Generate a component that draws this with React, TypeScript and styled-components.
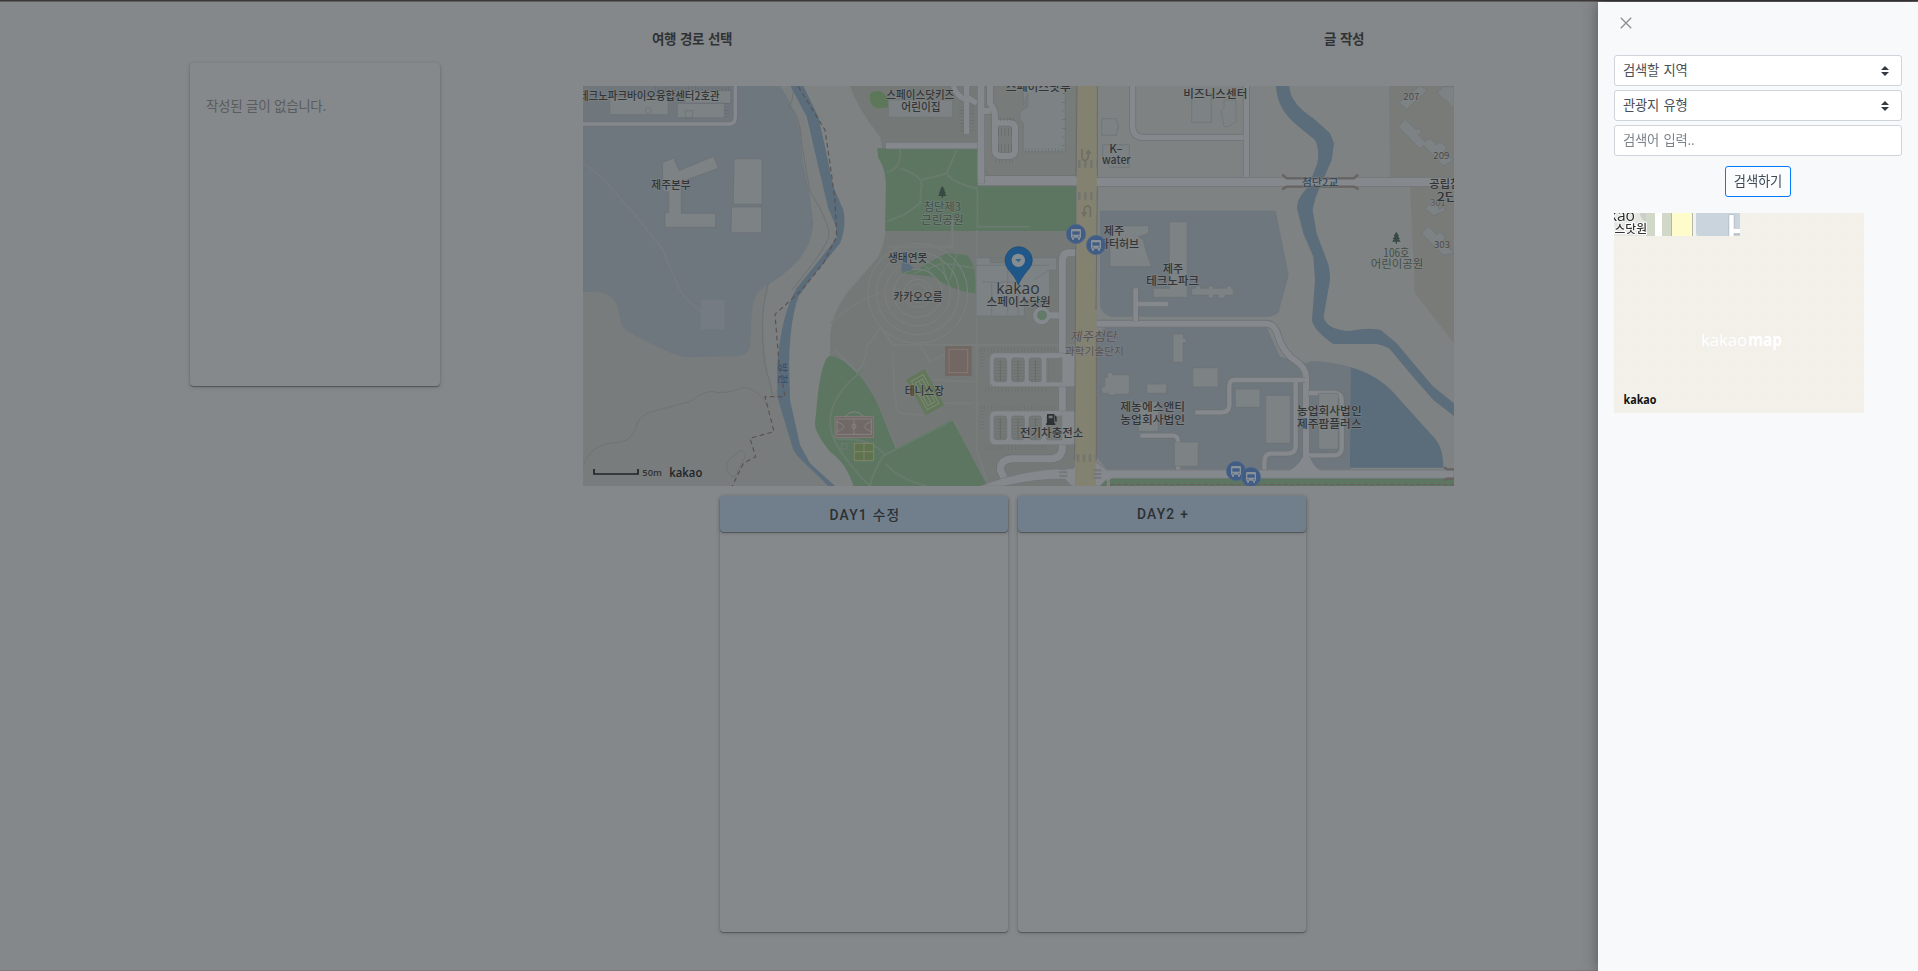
import React from "react";
import styled, { createGlobalStyle } from "styled-components";

const Global = createGlobalStyle`
  * { box-sizing: border-box; }
  html, body { margin: 0; height: 100%; overflow: hidden; }
  body { background: #84888a; font-family: "Noto Sans CJK KR", sans-serif; font-size: 14px; color: #2f3235; }
`;

const Page = styled.div`
  width: 100%;
  height: 971px;
  display: flex;
  flex-direction: column;
  border-top: 1px solid #3a3839;
  border-bottom: 1px solid #7c7a7e;
  box-shadow: inset 0 1px 0 #625d5e;
`;

const Columns = styled.main`
  display: flex;
  align-items: flex-start;
  padding-left: 190px;
`;

const PostCard = styled.aside`
  width: 250px;
  height: 323px;
  margin-top: 62px;
  padding: 30px 16px;
  border-radius: 4px;
  background: #85898b;
  box-shadow: 0 1px 1px rgba(0, 0, 0, 0.3), 0 1px 4px rgba(0, 0, 0, 0.18);
`;

const EmptyText = styled.p`
  margin: 0;
  font-size: 13.5px;
  line-height: 25px;
  letter-spacing: -0.35px;
  word-spacing: 1.2px;
  color: #5a5d5f;
  white-space: nowrap;
`;

const Planner = styled.section`
  width: 871px;
  margin-left: 143px;
`;

const Headings = styled.header`
  height: 85px;
  padding: 27px 90px 0 69px;
  display: flex;
  justify-content: space-between;
`;

const Heading = styled.h2`
  margin: 0;
  font-size: 13.5px;
  line-height: 21px;
  font-weight: 700;
  letter-spacing: -0.4px;
  word-spacing: 1.3px;
  color: #303335;
  white-space: nowrap;
`;

const MapCanvas = styled.svg`
  display: block;
  width: 871px;
  height: 400px;
  font-family: "Noto Sans CJK KR", sans-serif;
`;

const Days = styled.div`
  display: flex;
  gap: 10px;
  padding: 10px 0 0 137px;
`;

const DayPanel = styled.div`
  width: 288px;
  height: 436px;
  border-radius: 4px;
  background: #85898b;
  box-shadow: 0 1px 1px rgba(0, 0, 0, 0.3), 0 1px 4px rgba(0, 0, 0, 0.18);
`;

const DayButton = styled.button`
  display: block;
  width: 100%;
  height: 36px;
  padding: 0 0 0 2px;
  border: 0;
  border-radius: 4px;
  background: #717f8c;
  color: #2c3033;
  font-family: Roboto, "Noto Sans CJK KR", sans-serif;
  font-size: 13.8px;
  font-weight: 500;
  letter-spacing: 1.25px;
  box-shadow: 0 1px 1px rgba(0, 0, 0, 0.35), 0 1px 4px rgba(0, 0, 0, 0.14);
`;

const Drawer = styled.aside`
  position: fixed;
  top: 2px;
  right: 0;
  bottom: 0;
  width: 320px;
  padding: 15px 16px;
  background: #f8f9fb;
  box-shadow: 0 0 14px rgba(0, 0, 0, 0.36);
`;

const CloseButton = styled.button`
  display: block;
  width: 12px;
  height: 12px;
  margin: 0 0 26px 6px;
  padding: 0;
  border: 0;
  background: none;
  svg { display: block; }
`;

const Form = styled.form`
  display: flex;
  flex-direction: column;
  gap: 4px;
`;

const Field = styled.div<{ $muted?: boolean }>`
  height: 31px;
  padding: 0 12px 2px 8px;
  display: flex;
  align-items: center;
  justify-content: space-between;
  border: 1px solid #ced4da;
  border-radius: 3px;
  background: #fff;
  color: ${(p) => (p.$muted ? "#7b838a" : "#495057")};
  font-size: 13.3px;
  line-height: 20px;
  letter-spacing: -0.2px;
  word-spacing: 1.6px;
  svg { margin-top: 2px; }
`;

const SearchButton = styled.button`
  align-self: center;
  width: 66px;
  height: 31px;
  margin-top: 6px;
  padding: 0 0 3px;
  border: 1px solid #007bff;
  border-radius: 3px;
  background: #fbfcfd;
  color: #3d4a57;
  font: 13.3px "Noto Sans CJK KR", sans-serif;
  letter-spacing: -0.15px;
`;

const MiniMap = styled.svg`
  display: block;
  width: 250px;
  height: 200px;
  margin-top: 16px;
  font-family: "Noto Sans CJK KR", sans-serif;
`;

const Caret = () => (
  <svg width="8" height="10" viewBox="0 0 8 10">
    <path d="M0 4 4 0l4 4zM0 6l4 4 4-4z" fill="#343a40" />
  </svg>
);

type LabelProps = { x: number; y: number; w: number; size?: number; color?: string; weight?: number; children: string };

/* x is the centre of the label, w its drawn width */
const Label = ({ x, y, w, size = 34, color = "#323538", weight = 500, children }: LabelProps) => (
  <text
    x={x - w / 2}
    y={y + size * 0.36}
    fontSize={size}
    fontWeight={weight}
    fill={color}
    stroke="#858989"
    strokeOpacity="0.55"
    strokeWidth="4"
    paintOrder="stroke"
    textLength={w}
    lengthAdjust="spacingAndGlyphs"
  >
    {children}
  </text>
);

const BusStop = ({ x, y }: { x: number; y: number }) => (
  <g transform={`translate(${x} ${y})`}>
    <circle r="29" fill="#415c85" stroke="#52698d" strokeWidth="2" />
    <path d="M-11-15H11Q15-15 15-11V11H-15V-11Q-15-15-11-15Z" fill="#8a9299" />
    <path d="M-11-8H11V2H-11Z" fill="#415c85" />
    <path d="M-12 11h6v6h-6zM6 11h6v6H6z" fill="#8a9299" />
    <circle cx="-9" cy="7" r="2" fill="#415c85" />
    <circle cx="9" cy="7" r="2" fill="#415c85" />
  </g>
);

const Tree = ({ x, y }: { x: number; y: number }) => (
  <path
    transform={`translate(${x} ${y})`}
    d="M0-18 8-5H5L11 4H7L13 12H2V18H-2V12H-13L-7 4H-11L-5-5H-8Z"
    fill="#394a43"
  />
);

const C = {
  land: "#787c7c",
  pale: "#7e8282",
  park: "#747978",
  zone: "#6e767e",
  river: "#5b6c7a",
  green: "#5c7662",
  road: "#85898d",
  edge: "#6f7375",
  house: "#7d8285",
  yellow: "#838270",
};

const ParkingLot = ({ y }: { y: number }) => (
  <g>
    <path d={`M1203 ${y - 10}H1430M1215 ${y + 110}H1400`} stroke="#6c7170" strokeWidth="14" strokeDasharray="2 8" />
    <path d={`M1206 ${y - 10}V${y + 60}M1409 ${y + 15}V${y + 90}`} stroke="#6c7170" strokeWidth="14" strokeDasharray="2 8" />
    <rect x="1229" y={y} width="269" height="101" rx="16" fill={C.road} stroke="#747879" strokeWidth="2" />
    {[1242, 1295, 1347].map((x) => (
      <g key={x}>
        <rect x={x} y={y + 15} width="38" height="71" rx="8" fill="#747978" stroke="#6b706f" strokeWidth="2" />
        <path d={`M${x + 10} ${y + 24}V${y + 82}M${x + 28} ${y + 24}V${y + 82}`} stroke="#6c7170" strokeWidth="15" strokeDasharray="2 7" />
        <path d={`M${x + 19} ${y + 22}V${y + 84}`} stroke="#656a69" strokeWidth="3" />
      </g>
    ))}
    <rect x="1399" y={y + 13} width="48" height="75" fill="#747978" />
    <path d={`M1405 ${y + 15}V${y + 86}`} stroke="#6c7170" strokeWidth="1" />
    <path d={`M1385 ${y + 3}H1398V${y + 98}H1385Z`} fill={C.road} />
  </g>
);

const Road = ({ d, w }: { d: string; w: number }) => (
  <g fill="none" strokeLinejoin="round">
    <path d={d} stroke={C.edge} strokeWidth={w + 5} />
    <path d={d} stroke={C.road} strokeWidth={w} />
  </g>
);

const TravelMap = () => (
  <MapCanvas viewBox="9 18 2613 1200" preserveAspectRatio="none">
    <rect x="9" y="18" width="2613" height="1200" fill={C.land} />
    <path d="M640 18H2622V1218H745L640 1110 592 930 605 750 650 620 772 475Z" fill={C.pale} />
    <path d="M590 18H650L745 385 772 475 650 625 592 850V930L578 940Q550 830 548 700L565 600 668 500Z" fill="#7b7f7f" />
    <path d="M9 18H600Q650 90 660 160L668 240 690 350 700 430Q695 500 650 545 615 585 540 629 517 655 515 700L510 800Q500 830 460 829L320 832Q270 825 140 752 120 735 115 690 105 640 50 636H9Z" fill={C.zone} />
    <path d="M9 250Q40 265 90 320L170 410 245 505Q275 570 300 630 320 665 365 695" fill="none" stroke="#747a80" strokeWidth="6" />
    <rect x="362" y="660" width="72" height="87" fill="#747b82" />
    <path d="M640 18Q640 70 625 78 660 95 665 190L690 335Q750 430 747 470 735 510 635 630M565 610Q548 680 548 720 545 850 568 900L578 945" fill="none" stroke="#6d7171" strokeWidth="3" />
    <path d="M9 1155Q35 1095 90 1090 150 1090 165 1050 175 1005 215 995L330 965Q375 930 400 935 430 945 490 922 535 925 565 980M440 1160Q435 1145 480 1112 505 1115 490 1140L465 1190Q445 1190 440 1160" fill="none" stroke="#6f7373" strokeWidth="3" />

    {/* western stream */}
    <path d="M632 18 680 110 710 240 745 385 768 440 770 475 650 625Q605 700 592 850V950L640 1110 655 1130 745 1218H765L690 1150 660 1095 630 960 627 850Q630 720 655 650L690 600 780 490Q800 440 790 390L760 320 735 200 715 110 670 18Z" fill={C.river} />
    <path d="M655 20 735 150 750 250 765 360 770 470 730 550 665 630 585 703 597 850 615 950H555L582 1055 510 1075 527 1130 490 1150 457 1218" fill="none" stroke="#5c5252" strokeWidth="3.5" strokeDasharray="14 10" />

    {/* park */}
    <path d="M810 18Q835 90 900 170L917 260 918 450Q910 500 895 530L800 640Q750 710 750 780V828L900 990 950 1107 1120 1020 1220 1218H1485V18Z" fill={C.park} />
    <path d="M892 205H1192V318H1488V453H915L918 310Q915 260 895 235ZM1100 520 1160 525Q1190 550 1187 640 1120 635 1060 590L965 580Q970 560 1010 570L1060 540Z" fill={C.green} />
    <path d="M870 40Q900 22 920 50L940 80 900 85Q865 85 870 40Z" fill="#5d7858" />
    <path d="M750 828Q790 830 850 900 890 960 900 990L948 1107 1118 1020 1222 1218H820Q800 1150 750 1115 705 1060 705 1030L715 930Q730 830 750 828Z" fill={C.green} />
    <g fill="none" stroke="#687b6c" strokeWidth="6">
      <path d="M960 205Q965 270 920 275M960 265Q1020 285 1025 310L1020 370 970 405 920 425M1025 300 1100 280 1130 210M1100 280Q1120 310 1190 325M1192 320V445M1190 440H1350" />
      <path d="M850 870Q730 960 755 1060 780 1130 870 1218M770 1078Q870 1070 915 1125L1118 1020M915 1120Q880 1170 870 1218M915 1150Q960 1200 1040 1218" />
      <path d="M1010 520 1060 590M1080 525 1100 600M1130 525 1110 600M1000 580 1090 550 1187 565" />
    </g>
    <g fill="none" stroke="#7c8180" strokeWidth="3">
      {[28, 42, 72, 98, 124, 150].map((r) => (
        <circle key={r} cx="1013" cy="640" r={r} />
      ))}
      <path d="M900 740 940 795H1485M1190 450V1110L1220 1200M940 820Q940 990 960 1000L1030 1005M1060 900 1190 905M1080 970H1180M1020 795 1050 845 1140 800M1117 420V500L920 500M750 730Q830 660 900 640M765 810 830 875Q860 850 860 800 900 750 900 740" strokeWidth="6" stroke="#787d7c" />
    </g>
    <path d="M965 550h20l15 12-8 10-28 2z" fill={C.river} />

    {/* courts */}
    <rect x="765" y="1010" width="115" height="62" fill="#706968" stroke="#857b7a" strokeWidth="3" />
    <g fill="none" stroke="#8b8582" strokeWidth="2.5">
      <rect x="771" y="1017" width="103" height="46" />
      <path d="M822 1017v46M771 1025q42 15 0 30M874 1025q-42 15 0 30M795 1010Q822 980 852 1010" />
      <circle cx="822" cy="1039" r="6" />
      <rect x="785" y="1091" width="16" height="16" stroke="#727b70" />
    </g>
    <path d="M823 1090h58v52h-58z M852 1090v52M823 1115h58" fill="#5f734e" stroke="#7f856c" strokeWidth="3" />
    <rect x="1095" y="798" width="80" height="90" fill="#736763" />
    <rect x="1107" y="808" width="56" height="70" fill="none" stroke="#837975" strokeWidth="3" />
    <g transform="translate(1035 936) rotate(-29)">
      <rect x="-32" y="-60" width="64" height="122" fill="#63775a" />
      <path d="M-20-48H20V50H-20ZM-12-38H12V40H-12ZM-20 0H20M0-38V40" fill="none" stroke="#7c8974" strokeWidth="3" />
    </g>

    {/* buildings of the north-west block */}
    <path d="M9 18H455V108Q455 124 440 124H9Z" fill="#70777c" />
    <g fill={C.house} stroke="#6a6f74" strokeWidth="2">
      <path d="M89 50H265V104H89ZM292 70H433V113H292ZM315 32H452V70H315ZM316 92H338V113H316Z" />
      <circle cx="205" cy="92" r="9" />
      <path d="M247 248 281 234 297 272 401 229 415 265 304 305V400H407V442H255V398H266V335H249Z" />
      <path d="M462 236H546V373H460ZM455 381H545V458H453Z" />
    </g>
    <path d="M225 26H452" stroke="#656a70" strokeWidth="14" strokeDasharray="2 8" />
    <path d="M441 70V118" stroke="#656a70" strokeWidth="14" strokeDasharray="2 8" />
    <Road d="M0 132H448Q466 132 466 112V10" w={10} />

    {/* research blocks east of the avenue */}
    <path d="M1560 392H2087L2126 585 2095 700 2070 710H1592Q1560 700 1560 670Z" fill={C.zone} />
    <path d="M1550 760 1580 742H2060L2100 830 2180 850Q2190 843 2200 843 2260 845 2312 862V1168H1580L1550 1130Z" fill={C.zone} />
    <path d="M2312 862Q2400 885 2460 960L2560 1070Q2590 1100 2590 1163H2310Z" fill={C.river} />
    <path d="M2427 18H2622V790L2505 640 2490 320 2430 292Z" fill="#797b79" />

    {/* eastern river */}
    <path d="M2088 18Q2090 85 2150 135L2205 180Q2220 210 2212 250L2185 320Q2145 360 2152 390L2170 460 2200 530 2205 600 2196 720Q2200 750 2260 792H2390Q2430 800 2440 820L2490 880 2560 960 2622 1008V970L2560 920 2500 850 2450 790 2405 752Q2380 740 2310 753 2240 750 2231 710L2250 600Q2250 560 2240 540L2210 460 2198 390Q2205 350 2225 310L2255 240 2262 190 2250 160 2200 115Q2130 70 2128 18Z" fill={C.river} />

    {/* streets */}
    <path d="M1212 100V240Q1212 288 1240 288H1460Q1488 288 1488 270V18H1240" fill="#777c7a" stroke={C.edge} strokeWidth="2" />
    <Road d="M918 197H1200" w={17} />
    <Road d="M1160 18V162M1120 18Q1130 50 1160 60M1160 50 1190 70" w={16} />
    <Road d="M1195 302H1492" w={28} />
    <Road d="M1203 10V310M1210 93H1232M1230 10V70Q1245 90 1245 110V210Q1245 226 1260 228H1290Q1305 226 1305 210V140Q1302 128 1285 128H1250" w={18} />
    <path d="M1203 20V300" stroke={C.road} strokeWidth="20" />
    <Road d="M1500 518H1465Q1447 518 1447 545V1105Q1445 1136 1412 1136H1295Q1260 1140 1261 1170L1275 1200" w={21} />
    <ParkingLot y={819} />
    <ParkingLot y={993} />
    <path d="M1395 827H1440M1395 1000H1440" stroke={C.road} strokeWidth="14" />
    <Road d="M1658 10V140Q1658 172 1692 172H1990M1999 10V296" w={16} />
    <Road d="M1550 306H2622" w={25} />
    <Road d="M1550 731H2060Q2085 732 2095 770 2110 820 2150 845 2178 865 2178 890V1170" w={18} />
    <Road d="M1667 625V725M1667 672H1765" w={14} />
    <Road d="M2175 900H1960Q1948 902 1948 920V975Q1948 997 1925 997H1846M2147 905V1100Q2146 1121 2120 1121H2070Q2053 1123 2053 1150V1180M2185 939H2265Q2285 942 2285 960V1105Q2284 1126 2260 1126H2185M1681 1067H1780Q1794 1068 1794 1085V1175" w={13} />
    <path d="M1200 1218Q1330 1165 1480 1165L1500 1140H1540L1580 1170H2130Q2155 1155 2168 1130H2190Q2200 1158 2220 1170H2622V1195H1600L1560 1218Z" fill={C.road} stroke={C.edge} strokeWidth="2" />
    <path d="M2178 1100V1165" stroke={C.road} strokeWidth="18" />
    <path d="M1275 1218Q1370 1195 1455 1198L1475 1218Z" fill={C.park} stroke={C.edge} strokeWidth="2" />
    <path d="M1590 1196H2622V1218H1590ZM1560 1218 1580 1197V1218Z" fill={C.green} />
    <path d="M1590 1214H2622" stroke="#6f5e5d" strokeWidth="4" strokeDasharray="12 8" />
    <path d="M1492 18H1552L1547 1218H1485Z" fill={C.yellow} />
    <path d="M1491 18 1488 290M1488 318 1484 1140M1552 18V290M1552 320 1548 690M1549 760V1140" fill="none" stroke="#696c69" strokeWidth="3" />
    <path d="M1494 252H1550M1494 348H1550M1490 1134H1546" stroke="#74756c" strokeWidth="23" strokeDasharray="8 10" />
    <path d="M1552 1168v30M1450 1163v34" stroke="#74787a" strokeWidth="24" strokeDasharray="6 5" />
    <g fill="none" stroke="#6e6e66" strokeWidth="5">
      <path d="M1506 208V232Q1508 243 1517 241 1525 238 1525 225V218M1519 222 1525 212 1532 222M1531 411V385Q1528 376 1520 378 1512 381 1512 395V405M1506 397 1512 407 1519 397" />
    </g>

    {/* bridge */}
    <path d="M2107 284 2120 295H2322L2334 284M2107 328 2120 320H2322L2336 328" fill="none" stroke="#686363" strokeWidth="7" />
    <path d="M2592 1162 2602 1168H2622M2592 1200 2602 1196H2622" fill="none" stroke="#686363" strokeWidth="7" />

    {/* buildings */}
    <g fill={C.house} stroke="#6d7276" strokeWidth="2">
      <path d="M925 60H1118V112H925Z" />
      <path d="M1330 18H1456V215H1330V130Q1315 120 1320 95L1343 80V40L1330 75Z" />
      <path d="M1188 533H1430V570H1409V660H1333V708H1188ZM1188 556H1409M1206 606H1315V708M1235 606V708M1283 556V700M1230 533V548H1310L1325 535M1360 600 1409 570M1360 640 1395 660" />
      <path d="M1565 116H1610V128L1615 130V148H1610V166H1565ZM1568 194H1648V262H1590L1568 235Z" />
      <path d="M1590 437H1706V460L1675 470 1690 480 1700 520 1715 560H1590Z" />
      <path d="M1768 425H1822V652H1720V625H1768ZM1835 625H1848V618H1862V625H1885V618H1900V625H1940V618H1955V625H1960V645H1935V654H1915V645H1900V654H1885V645H1835Z" />
      <path d="M1835 40H1894V127H1835ZM1932 60H1968V125L1945 140H1932L1924 95 1932 85Z" />
      <path d="M2455 140 2475 118 2510 150 2515 143 2525 155 2515 165 2535 185 2550 175 2570 195 2580 185 2600 200 2590 220 2622 240 2590 258 2530 195 2520 207ZM2457 67 2520 18 2543 30 2480 88ZM2572 38 2590 20H2622V85ZM2535 385 2560 365 2580 390 2585 380 2600 390 2560 407ZM2525 460 2545 438 2570 465 2580 455 2595 470 2590 485 2622 520 2590 525Z" />
      <path d="M1582 878H1598V884H1648V943H1602V946H1586V940H1565V920H1574V892H1582ZM1700 912H1760V940H1700Z" />
      <path d="M1779 762H1810V775H1819V788H1809V847H1779ZM1838 863H1915V921H1838ZM1966 927H2040V982H1966ZM2057 946H2131V1090H2057ZM2216 940H2275V1108H2216ZM1783 1086H1855V1159H1783ZM1675 965H1735V1054H1675Z" />
    </g>
    <g stroke="#646968" strokeWidth="24" strokeDasharray="2 8">
      <path d="M1254 157H1298M1254 205H1298" />
    </g>
    <path d="M1260 118H1308M1247 243H1306" stroke="#6a6f6d" strokeWidth="11" strokeDasharray="2 8" />
    <path d="M1145 80V155M1176 80V155" stroke="#6a6f6d" strokeWidth="12" strokeDasharray="2 8" />
    <path d="M1335 209H1450" stroke="#6a6f6d" strokeWidth="9" strokeDasharray="2 8" />
    <path d="M1451 40V205" stroke="#6a6f6d" strokeWidth="11" strokeDasharray="2 24" />

    {/* roundabout */}
    <circle cx="1385" cy="707" r="27" fill={C.road} stroke={C.edge} strokeWidth="2" />
    <path d="M1450 706H1400" stroke={C.road} strokeWidth="18" />
    <circle cx="1386" cy="706" r="15" fill="#627b68" />

    {/* labels */}
    <Label x={208} y={47} w={422}>테크노파크바이오융합센터2호관</Label>
    <Label x={273} y={314} w={118}>제주본부</Label>
    <Label x={1021} y={44} w={204}>스페이스닷키즈</Label>
    <Label x={1023} y={80} w={118}>어린이집</Label>
    <Label x={1375} y={22} w={195}>스페이스닷투</Label>
    <Label x={1608} y={206} w={40}>K–</Label>
    <Label x={1609} y={239} w={86}>water</Label>
    <Tree x={1087} y={336} />
    <Label x={1087} y={380} w={112} color="#414d48" weight={400}>첨단제3</Label>
    <Label x={1087} y={419} w={128} color="#414d48" weight={400}>근린공원</Label>
    <Label x={983} y={534} w={118} size={33}>생태연못</Label>
    <BusStop x={1488} y={462} />
    <Label x={1602} y={454} w={62}>제주</Label>
    <Label x={1602} y={493} w={150}>스타터허브</Label>
    <BusStop x={1548} y={495} />
    <Label x={1779} y={566} w={62}>제주</Label>
    <Label x={1778} y={604} w={158}>테크노파크</Label>
    <Label x={1906} y={41} w={192}>비즈니스센터</Label>
    <Label x={2220} y={307} w={110} size={32} color="#354a5e">첨단2교</Label>
    <Label x={2494} y={49} w={48} size={29} color="#4b4745" weight={400}>207</Label>
    <Label x={2584} y={226} w={48} size={29} color="#4b4745" weight={400}>209</Label>
    <Label x={2574} y={367} w={46} size={29} color="#5b5755" weight={400}>301</Label>
    <Label x={2586} y={493} w={48} size={29} color="#4b4745" weight={400}>303</Label>
    <Label x={2610} y={311} w={124}>공립첨단</Label>
    <Label x={2622} y={352} w={104}>2단지</Label>
    <Tree x={2449} y={473} />
    <Label x={2449} y={518} w={78} color="#414d48" weight={400}>106호</Label>
    <Label x={2451} y={552} w={158} color="#414d48" weight={400}>어린이공원</Label>
    <Label x={1014} y={651} w={148} size={33}>카카오오름</Label>
    <Label x={1316} y={665} w={193}>스페이스닷원</Label>
    <text x="1249" y="643" fontFamily="Open Sans" fontSize="47" fontWeight="500" fill="#303336" stroke="#858989" strokeWidth="4" paintOrder="stroke" textLength="130">kakao</text>
    <Label x={1033} y={933} w={118} size={33}>테니스장</Label>
    <g transform="skewX(-10)">
      <Label x={1678} y={768} w={140} size={38} color="#585154" weight={400}>제주첨단</Label>
    </g>
    <Label x={1543} y={813} w={178} size={31} color="#585154" weight={400}>과학기술단지</Label>
    <path d="M1401 1002H1423V1030H1426V1035H1398V1030H1401ZM1406 1007V1015H1418V1007ZM1424 1005 1430 1010V1025H1426" fill="#2e3234" fillRule="evenodd" />
    <Label x={1415} y={1060} w={190}>전기차충전소</Label>
    <Label x={1718} y={982} w={194}>제농에스앤티</Label>
    <Label x={1718} y={1021} w={194}>농업회사법인</Label>
    <Label x={2248} y={994} w={194}>농업회사법인</Label>
    <Label x={2248} y={1033} w={194}>제주팜플러스</Label>
    <g transform="translate(608 848) rotate(90)">
      <text y="10" fontSize="32" fill="#344f69" textLength="64">방천</text>
    </g>
    <BusStop x={1968} y={1173} />
    <BusStop x={2013} y={1191} />

    {/* selected place */}
    <path d="M1315 615Q1309 595 1286 570 1275 556 1275 541A41 41 0 0 1 1357 541Q1357 556 1344 570 1321 597 1315 615Z" fill="#1f5789" stroke="#1a4977" strokeWidth="2" />
    <circle cx="1315" cy="541" r="20" fill="#878c90" />
    <path d="M1306 537H1324L1315 547Z" fill="#2e648f" />

    {/* scale */}
    <path d="M42 1167V1182H174V1167" fill="none" stroke="#202326" strokeWidth="5" />
    <text x="187" y="1189" fontFamily="Open Sans" fontSize="28" fontWeight="600" fill="#303336" textLength="59">50m</text>
    <text x="268" y="1191" fontFamily="Open Sans" fontSize="37" fontWeight="600" fill="#222528" textLength="99" lengthAdjust="spacingAndGlyphs">kakao</text>
  </MapCanvas>
);

const gridX = Array.from({ length: 16 }, (_, i) => 16.5 + i * 16);
const gridY = Array.from({ length: 12 }, (_, i) => 16.5 + i * 16);

const PreviewMap = () => (
  <MiniMap viewBox="0 0 250 200">
    <rect width="250" height="200" fill="#f2f0e9" />
    <path
      d={gridX.map((x) => `M${x} 0V200`).join("") + gridY.map((y) => `M0 ${y}H250`).join("")}
      stroke="#f1f1ed"
    />
    <svg width="126" height="23" viewBox="0 0 126 23">
      <rect width="126" height="23" fill="#e4e8e1" />
      <path d="M26 0Q26 6 32 9V0Z" fill="#c9cfca" />
      <path d="M32 0H58V23H32Z" fill="#d1d8c8" />
      <path d="M41 0H48V23H41Z" fill="#fff" />
      <path d="M58 0H78V23H58Z" fill="#fffccb" />
      <path d="M57.5 0V23M78.5 0V23" stroke="#b4b6ac" />
      <path d="M79 0H82V23H79Z" fill="#f2f2f0" />
      <path d="M82 0H126V23H84L82 21Z" fill="#c9d4dc" />
      <path d="M117.5 23V1.5M117.5 18.5H126" stroke="#aeb6bd" strokeWidth="6" />
      <path d="M117.5 23V2M117.5 18H126" stroke="#fff" strokeWidth="4.5" />
      <text x="-22" y="8" fontFamily="Open Sans" fontSize="15.7" fontWeight="500" fill="#292929" stroke="#fff" strokeWidth="1.5" paintOrder="stroke" textLength="43">kakao</text>
      <text x="-32" y="19.5" fontSize="11.7" fontWeight="500" fill="#333" stroke="#fff" strokeWidth="2" paintOrder="stroke" textLength="65" lengthAdjust="spacingAndGlyphs">스페이스닷원</text>
    </svg>
    <text x="87" y="133" fontFamily="Open Sans" fontSize="17" fontWeight="400" fill="#fff" textLength="46" lengthAdjust="spacingAndGlyphs">kakao</text>
    <text x="134" y="133" fontFamily="Open Sans" fontSize="17" fontWeight="700" fill="#fff" textLength="34" lengthAdjust="spacingAndGlyphs">map</text>
    <text x="9.5" y="191" fontFamily="Open Sans" fontSize="12.5" fontWeight="700" fill="#111" textLength="33" lengthAdjust="spacingAndGlyphs">kakao</text>
  </MiniMap>
);

export default function App() {
  return (
    <>
      <Global />
      <Page>
        <Columns>
          <PostCard>
            <EmptyText>작성된 글이 없습니다.</EmptyText>
          </PostCard>
          <Planner>
            <Headings>
              <Heading>여행 경로 선택</Heading>
              <Heading>글 작성</Heading>
            </Headings>
            <TravelMap />
            <Days>
              <DayPanel>
                <DayButton>DAY1 수정</DayButton>
              </DayPanel>
              <DayPanel>
                <DayButton>DAY2 +</DayButton>
              </DayPanel>
            </Days>
          </Planner>
        </Columns>
      </Page>
      <Drawer>
        <CloseButton aria-label="닫기">
          <svg width="12" height="12" viewBox="0 0 12 12">
            <path d="M.8.8 11.2 11.2M11.2.8.8 11.2" stroke="#8b8d8f" strokeWidth="1.3" fill="none" />
          </svg>
        </CloseButton>
        <Form>
          <Field>
            <span>검색할 지역</span>
            <Caret />
          </Field>
          <Field>
            <span>관광지 유형</span>
            <Caret />
          </Field>
          <Field $muted>
            <span>검색어 입력..</span>
          </Field>
          <SearchButton type="button">검색하기</SearchButton>
        </Form>
        <PreviewMap />
      </Drawer>
    </>
  );
}
